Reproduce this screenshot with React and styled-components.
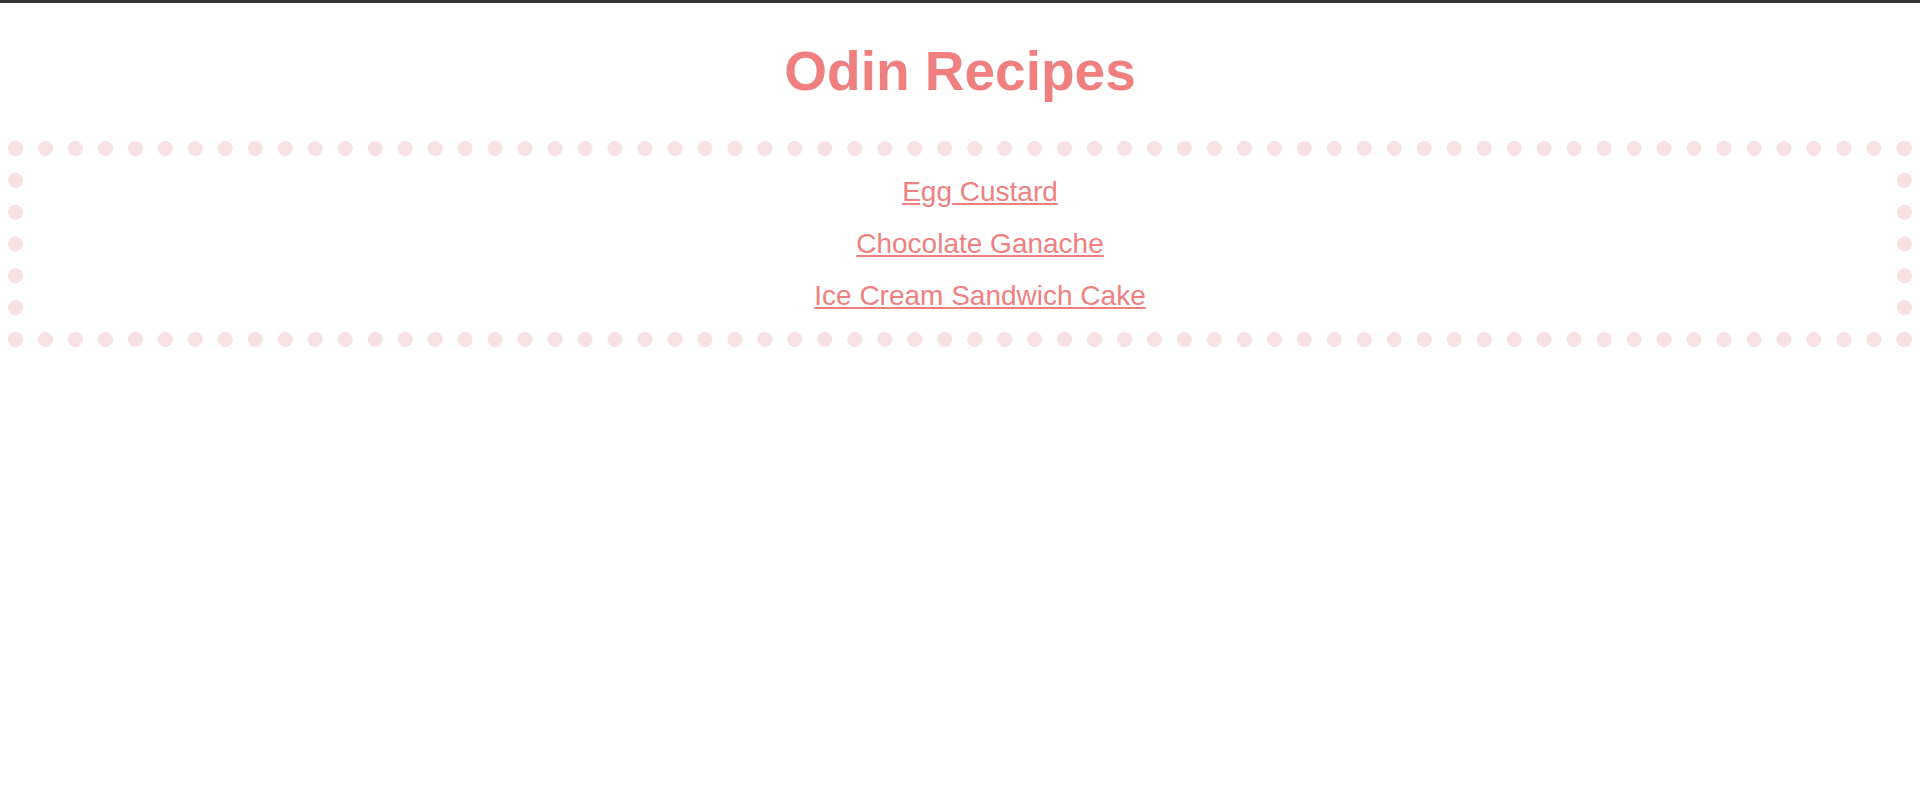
import React from "react";
import styled, { createGlobalStyle } from "styled-components";

const Global = createGlobalStyle`
  html { border-top: 3px solid #353535; }
  body { margin: 0 8px; font-family: "Liberation Sans", Arial, sans-serif; background: #fff; }
`;

const Title = styled.h1`
  margin: 0;
  padding: 37px 0 0;
  height: 138px;
  box-sizing: border-box;
  text-align: center;
  color: #f08080;
  font-size: 55px;
  font-weight: 700;
  line-height: 63px;
`;

const List = styled.ul`
  list-style: none;
  margin: 0;
  padding: 20px 0 20px 40px;
  border: 15px dotted #f8e1e2;
  display: flex;
  flex-direction: column;
  align-items: center;
  gap: 20px;
`;

const Item = styled.li`
  line-height: 32px;
  font-size: 28px;
`;

const Link = styled.a`
  color: #f08080;
  text-decoration: underline;
`;

const recipes = ["Egg Custard", "Chocolate Ganache", "Ice Cream Sandwich Cake"];

export default function App() {
  return (
    <>
      <Global />
      <Title>Odin Recipes</Title>
      <List>
        {recipes.map((r) => (
          <Item key={r}>
            <Link href="#">{r}</Link>
          </Item>
        ))}
      </List>
    </>
  );
}
